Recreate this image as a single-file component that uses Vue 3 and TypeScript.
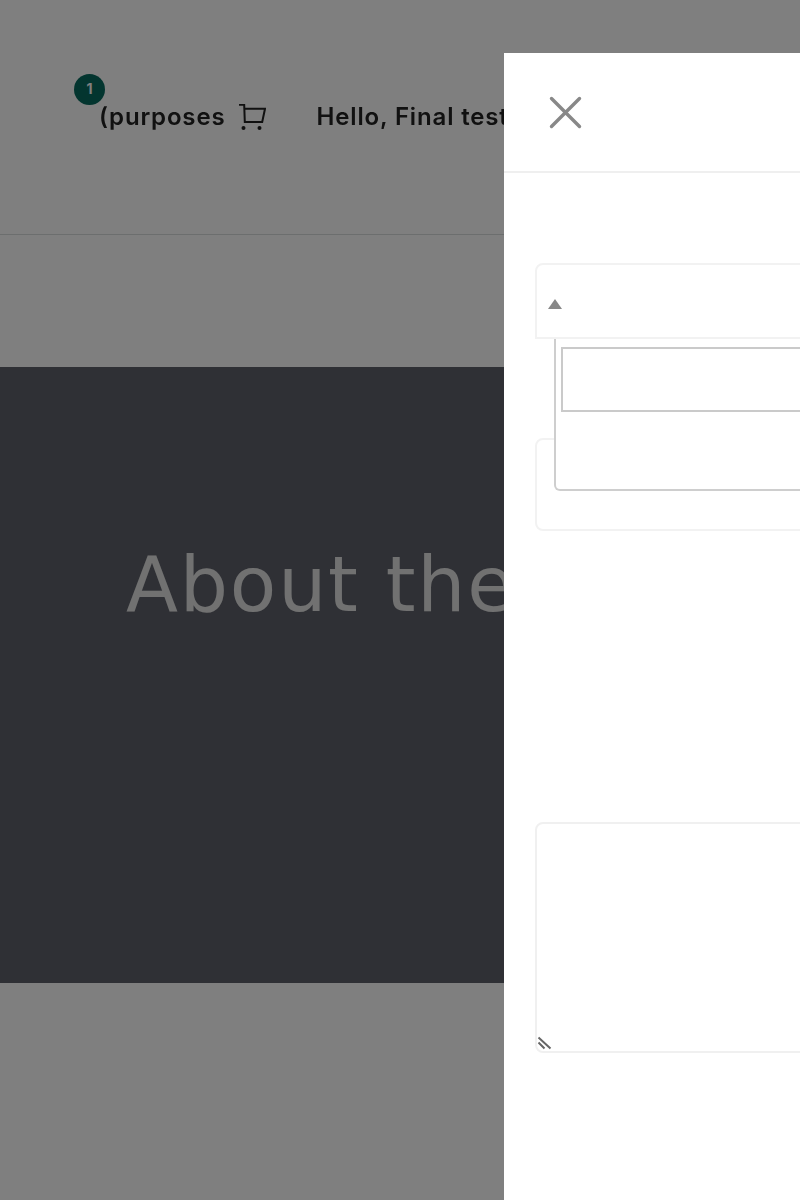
<script setup lang="ts">
const userName = 'Final test'
const cartCount = 1
</script>

<template>
  <div class="page">
    <header class="site-header">
      <div class="cart-link">
        <span class="badge">{{ cartCount }}</span>
        <span class="cart-label">(purposes</span>
        <svg class="cart-icon" width="27" height="27" viewBox="0 0 27 27" fill="none">
          <path d="M0 0.8h5.2L5.8 18h17.4L26 4.8H5.4" stroke="#222" stroke-width="2" />
          <circle cx="4.5" cy="24" r="2" fill="#222" />
          <circle cx="20.5" cy="24" r="2" fill="#222" />
        </svg>
      </div>
      <div class="greeting">Hello, {{ userName }}</div>
    </header>

    <section class="hero">
      <h1>About the</h1>
    </section>

    <div class="overlay"></div>

    <aside class="drawer">
      <div class="drawer-head">
        <svg class="close" width="34" height="34" viewBox="0 0 34 34" fill="none">
          <path d="M3.5 3.5l28 28M31.5 3.5l-28 28" stroke="#888" stroke-width="3.4" stroke-linecap="round" />
        </svg>
      </div>
      <div class="drawer-body">
        <div class="select-wrap">
          <div class="select-box">
            <span class="arrow"></span>
          </div>
          <div class="dropdown">
            <div class="search"></div>
          </div>
        </div>
        <div class="field"></div>
        <div class="textarea">
          <svg class="grip" width="16" height="15" viewBox="0 0 16 15" fill="none">
            <path d="M1.5 1.5l12 11M1.5 6.5l6 6" stroke="#666" stroke-width="2" />
          </svg>
        </div>
      </div>
    </aside>
  </div>
</template>

<style scoped>
.page {
  position: relative;
  width: 800px;
  height: 1200px;
  overflow: hidden;
  background: #fff;
  font-family: "Inter", "Liberation Sans", sans-serif;
}

.site-header {
  display: flex;
  align-items: center;
  gap: 50px;
  height: 234px;
  padding-left: 99px;
  border-bottom: 1px solid #d8dcdc;
}

.cart-link {
  position: relative;
  display: flex;
  align-items: center;
  gap: 14px;
}

.cart-label,
.greeting {
  margin-top: -2px;
  font-size: 24px;
  font-weight: 600;
  letter-spacing: 0.85px;
  color: #222;
  white-space: nowrap;
  filter: blur(0.5px);
}

.badge {
  position: absolute;
  left: -25px;
  top: -30px;
  width: 31px;
  height: 31px;
  border-radius: 50%;
  background: #076a5e;
  color: #fff;
  font-size: 14px;
  font-weight: 700;
  line-height: 29px;
  text-align: center;
}

.cart-icon {
  display: block;
  filter: blur(0.5px);
}

.hero {
  margin-top: 132px;
  height: 616px;
  padding: 172px 0 0 126px;
  box-sizing: border-box;
  background: #5e606a;
}

.hero h1 {
  margin: 0;
  font-family: "DejaVu Sans", "Inter", sans-serif;
  font-size: 76px;
  font-weight: 400;
  letter-spacing: 1.8px;
  line-height: 92px;
  color: #e2e2e2;
  white-space: nowrap;
  filter: blur(0.6px);
}

.overlay {
  position: absolute;
  inset: 0;
  background: rgba(0, 0, 0, 0.5);
}

.drawer {
  position: absolute;
  left: 504px;
  top: 53px;
  bottom: 0;
  width: 700px;
  background: #fff;
}

.drawer-head {
  display: flex;
  align-items: center;
  height: 120px;
  padding-left: 44px;
  border-bottom: 2px solid #efefef;
  box-sizing: border-box;
}

.close {
  display: block;
  filter: blur(0.5px);
}

.drawer-body {
  padding: 90px 0 0 31px;
}

.select-wrap {
  position: relative;
}

.select-box {
  display: flex;
  align-items: center;
  height: 76px;
  padding-left: 11px;
  border: 2px solid #f2f2f2;
  border-radius: 8px 8px 0 0;
  box-sizing: border-box;
}

.arrow {
  width: 0;
  height: 0;
  margin-top: 6px;
  border-left: 7px solid transparent;
  border-right: 7px solid transparent;
  border-bottom: 10px solid #888;
}

.dropdown {
  position: absolute;
  left: 19px;
  right: 0;
  top: 76px;
  height: 152px;
  padding: 8px 5px;
  background: #fff;
  border: 2px solid #cecece;
  border-top: none;
  border-radius: 0 0 6px 6px;
  box-sizing: border-box;
}

.search {
  height: 65px;
  border: 2px solid #cacaca;
  box-sizing: border-box;
}

.field {
  height: 93px;
  margin-top: 99px;
  border: 2px solid #f2f2f2;
  border-radius: 8px;
  box-sizing: border-box;
}

.textarea {
  position: relative;
  height: 231px;
  margin-top: 291px;
  border: 2px solid #f0f0f0;
  border-radius: 8px;
  box-sizing: border-box;
}

.grip {
  position: absolute;
  left: 0;
  bottom: 0;
  filter: blur(0.4px);
}
</style>
